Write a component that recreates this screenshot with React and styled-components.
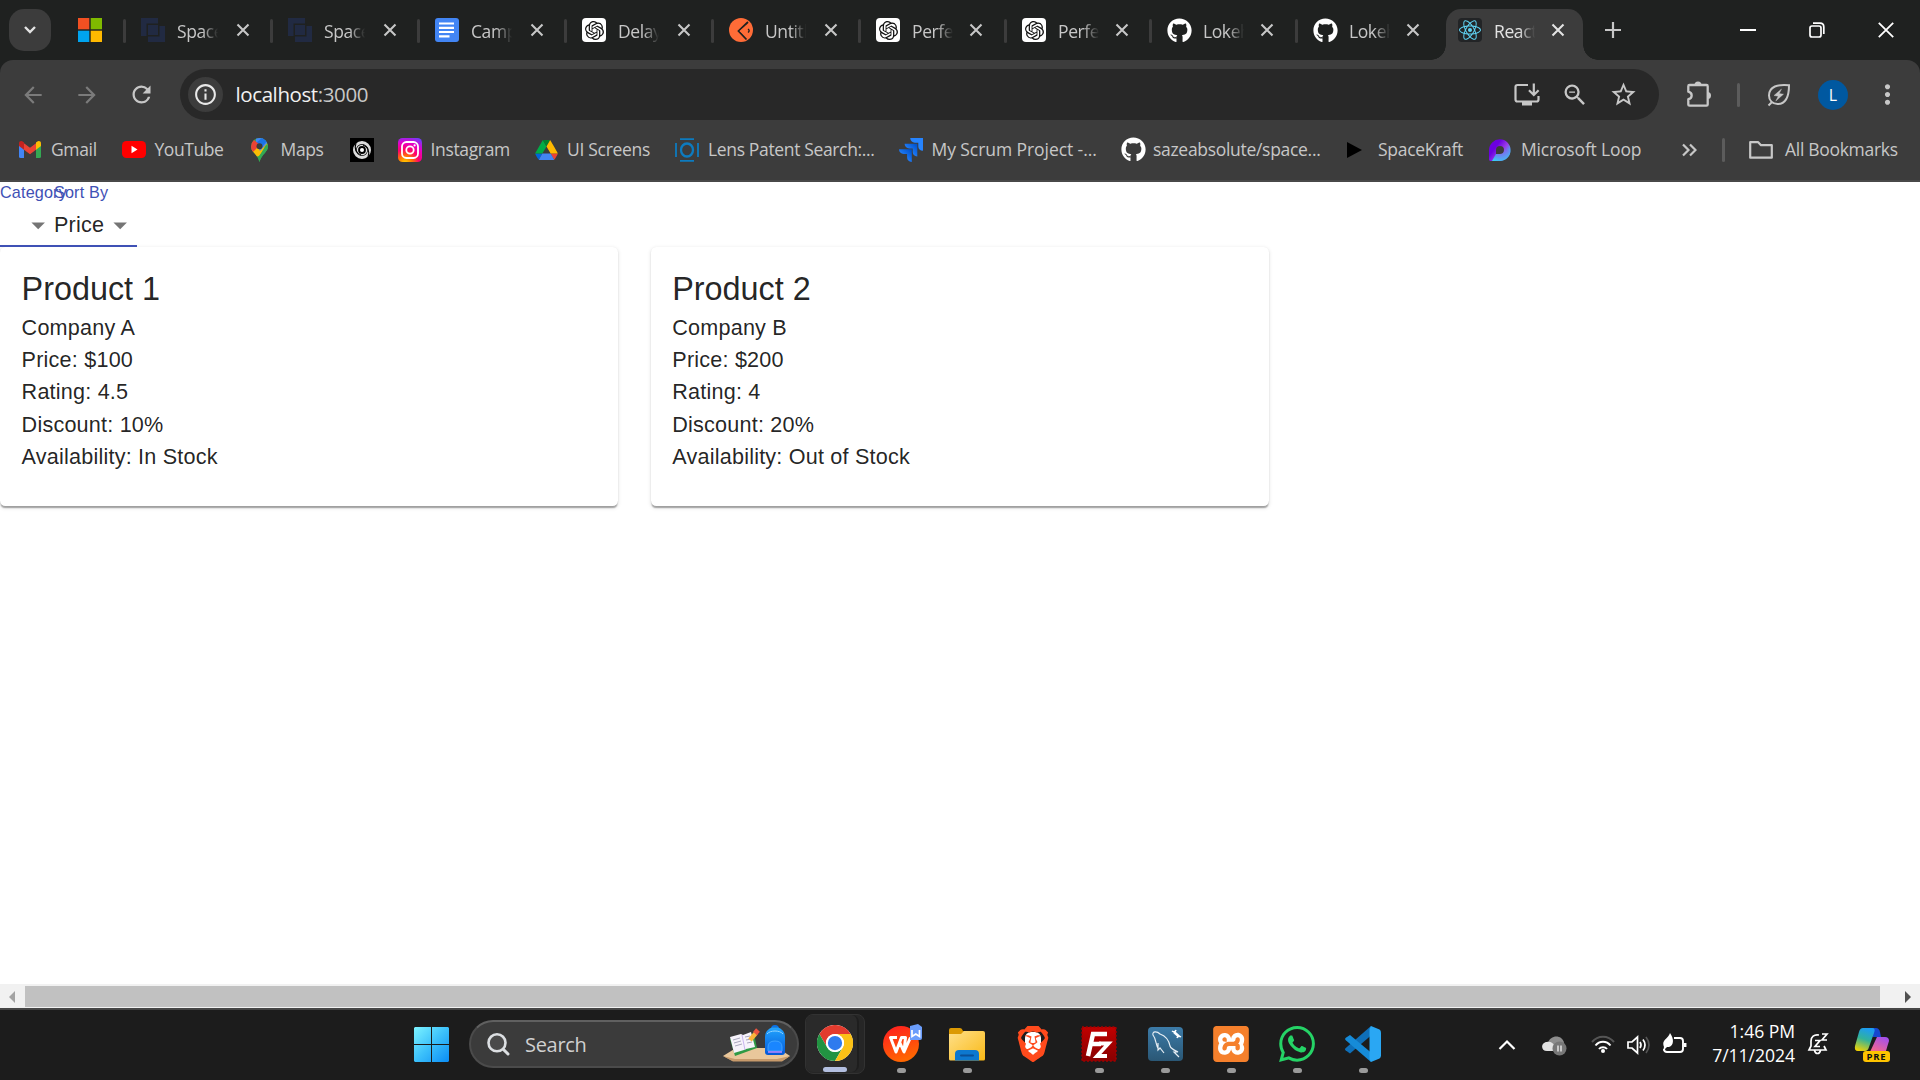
import React from "react";
import styled, { createGlobalStyle } from "styled-components";
import { FaGithub } from "react-icons/fa";
import { SiOpenai, SiBrave, SiXampp, SiWhatsapp, SiReact } from "react-icons/si";
import { MdArrowBack, MdArrowForward, MdRefresh, MdInfoOutline, MdZoomOut, MdStarOutline, MdMoreVert, MdArrowDropDown } from "react-icons/md";

const ui = '"Open Sans", "Noto Sans", sans-serif';

const Global = createGlobalStyle`
  * { box-sizing: border-box; }
  html, body { margin: 0; padding: 0; background: #fff; overflow: hidden; }
  svg { display: block; flex: none; }
`;

const Desktop = styled.div`
  width: 1920px;
  height: 1080px;
  display: flex;
  flex-direction: column;
  overflow: hidden;
  font-family: ${ui};
`;

/* ---------- tab strip ---------- */
const TabStrip = styled.div`
  height: 60px;
  display: flex;
  align-items: stretch;
  background: #1f2120;
`;
const TabSearch = styled.div`
  width: 42px;
  height: 42px;
  margin: 9px 0 0 9px;
  border-radius: 15px;
  background: #3c3c3c;
  display: grid;
  place-items: center;
`;
const PinnedTab = styled.div`
  width: 72px;
  padding: 18px 0 0 27px;
`;
const Tab = styled.div`
  width: ${(p) => p.$w}px;
  display: flex;
  position: relative;
  color: #c7c7c7;
  padding-left: 18px;
  &::before {
    content: "";
    position: absolute;
    left: 0;
    top: 19px;
    width: 3px;
    height: 24px;
    border-radius: 2px;
    background: #3c3c3c;
  }
`;
const ActiveTab = styled.div`
  width: 137px;
  height: 51px;
  margin-top: 9px;
  padding-left: 12px;
  display: flex;
  position: relative;
  color: #e3e3e3;
  background: #3c3c3c;
  border-radius: 15px 15px 0 0;
  &::before, &::after {
    content: "";
    position: absolute;
    bottom: 0;
    width: 15px;
    height: 15px;
  }
  &::before { left: -15px; background: radial-gradient(circle at 0 0, transparent 14.5px, #3c3c3c 15px); }
  &::after { right: -15px; background: radial-gradient(circle at 100% 0, transparent 14.5px, #3c3c3c 15px); }
`;
const TabIcon = styled.div`
  width: 24px;
  height: 24px;
  margin-top: ${(p) => (p.$active ? 9 : 18)}px;
`;
const TabTitle = styled.div`
  width: 42px;
  margin: ${(p) => (p.$active ? 9 : 18)}px 0 0 12px;
  height: 27px;
  line-height: 27px;
  font-size: 17.5px;
  letter-spacing: -0.4px;
  white-space: nowrap;
  overflow: hidden;
  mask-image: linear-gradient(90deg, #000 60%, transparent 98%);
`;
const TabClose = styled.div`
  width: 18px;
  margin: ${(p) => (p.$active ? 12 : 21)}px 0 0 ${(p) => (p.$tight ? 13 : 15)}px;
`;
const NewTab = styled.div`
  width: 30px;
  margin: 15px 0 0 15px;
  color: #c7c7c7;
`;
const WindowButtons = styled.div`
  margin-left: auto;
  display: flex;
  align-items: center;
  height: 59px;
`;
const WindowButton = styled.div`
  width: 69px;
  display: grid;
  place-items: center;
`;
const Tile = styled.div`
  width: 24px;
  height: 24px;
  border-radius: 4px;
  display: grid;
  place-items: center;
  background: ${(p) => p.$bg};
  color: ${(p) => p.$fg};
`;

/* ---------- toolbar ---------- */
const Chrome = styled.div`
  background: #1f2120;
`;
const ToolArea = styled.div`
  height: 122px;
  background: #3c3c3c;
  border-radius: 13px 13px 0 0;
  border-bottom: 2px solid #484848;
`;
const Toolbar = styled.div`
  height: 69px;
  padding: 9px 0 0 6px;
  display: flex;
`;
const NavButton = styled.div`
  width: 54px;
  height: 51px;
  flex: none;
  display: grid;
  place-items: center;
  color: ${(p) => (p.$off ? "#7b7b7b" : "#c7c7c7")};
`;
const Omnibox = styled.div`
  width: 1479px;
  height: 51px;
  flex: none;
  margin-left: 12px;
  padding: 0 12px 0 8px;
  border-radius: 26px;
  background: #282828;
  display: flex;
  align-items: center;
  color: #c7c7c7;
`;
const SiteInfo = styled.div`
  width: 35px;
  height: 35px;
  border-radius: 50%;
  display: grid;
  place-items: center;
  color: #e8e8e8;
  background: #3c3c3c;
`;
const Address = styled.div`
  flex: 1;
  margin-left: 12.5px;
  padding-bottom: 2px;
  font-size: 20.5px;
  letter-spacing: -0.4px;
  color: #c7c7c7;
  b { font-weight: 400; color: #f1f1f1; }
`;
const OmniAction = styled.div`
  width: 48px;
  display: grid;
  place-items: center;
`;
const ToolAction = styled.div`
  width: ${(p) => p.$w}px;
  height: 51px;
  flex: none;
  display: grid;
  place-items: center;
  color: #c7c7c7;
`;
const Rule = styled.div`
  width: 3px;
  height: 24px;
  border-radius: 2px;
  background: #5c5c5c;
`;
const Avatar = styled.div`
  width: 30px;
  height: 30px;
  border-radius: 50%;
  background: #0058a0;
  color: #fff;
  font-size: 16px;
  line-height: 30px;
  text-align: center;
`;

/* ---------- bookmarks ---------- */
const Bookmarks = styled.div`
  height: 51px;
  margin-top: -5px;
  padding-left: 19px;
  display: flex;
  align-items: center;
  color: #c7c7c7;
`;
const Bookmark = styled.div`
  width: ${(p) => p.$w}px;
  flex: none;
  display: flex;
  align-items: center;
`;
const BookmarkIcon = styled.div`
  width: ${(p) => p.$w}px;
  height: 24px;
  flex: none;
  display: flex;
  align-items: center;
`;
const BookmarkText = styled.span`
  white-space: nowrap;
  font-size: 17.5px;
  line-height: 26px;
  padding-bottom: 1px;
  letter-spacing: ${(p) => p.$ls ?? -0.35}px;
`;

/* ---------- page ---------- */
const Page = styled.main`
  height: 802px;
  background: #fff;
  color: rgba(0, 0, 0, 0.87);
  font-family: "Liberation Sans", Arial, sans-serif;
`;
const Filters = styled.div`
  display: flex;
  height: 64.8px;
`;
const FormControl = styled.div`
  position: relative;
  padding-top: 21.6px;
`;
const Label = styled.label`
  position: absolute;
  left: 0;
  top: 2px;
  white-space: nowrap;
  font-size: 16.2px;
  line-height: 1;
  letter-spacing: 0.00938em;
  color: #3f51b5;
`;
const Select = styled.div`
  height: 43.2px;
  min-width: 54px;
  display: flex;
  align-items: center;
  justify-content: flex-end;
  padding-top: 2px;
  font-size: 21.6px;
  letter-spacing: 0.00938em;
  border-bottom: 2.7px solid #3f51b5;
  svg { color: rgba(0, 0, 0, 0.54); }
`;
const Cards = styled.div`
  display: flex;
  gap: 32.4px;
`;
const Card = styled.article`
  width: 618.3px;
  height: 259.2px;
  padding: 21.6px;
  border-radius: 5.4px;
  background: #fff;
  box-shadow: 0 2.7px 1.35px -1.35px rgba(0,0,0,.2), 0 1.35px 1.35px 0 rgba(0,0,0,.14), 0 1.35px 4.05px 0 rgba(0,0,0,.12);
`;
const CardTitle = styled.h5`
  margin: 0;
  font-size: 32.4px;
  line-height: 43.2px;
  font-weight: 400;
  letter-spacing: -0.03px;
`;
const CardLine = styled.p`
  margin: 0;
  font-size: 21.6px;
  line-height: 32.4px;
  letter-spacing: 0.00938em;
`;
const Scrollbar = styled.div`
  height: 26px;
  padding: 2px 0 1px;
  display: grid;
  grid-template-columns: 25px 1855px 40px;
  background: #f1f1f1;
  border-bottom: 2px solid #454545;
`;
const Thumb = styled.div`
  background: #c1c1c1;
`;
const ScrollArrow = styled.div`
  display: flex;
  align-items: center;
  padding-left: ${(p) => p.$pad}px;
`;

/* ---------- taskbar ---------- */
const Taskbar = styled.footer`
  height: 70px;
  background: #1c1c1c;
  display: flex;
  padding-left: 414px;
  color: #fff;
`;
const Start = styled.div`
  width: 55px;
  padding-top: 17px;
`;
const SearchBox = styled.div`
  width: 330px;
  height: 48px;
  margin-top: 10px;
  padding: 0 6px 0 16px;
  border-radius: 24px;
  border: 2px solid #4b4b4b;
  border-top-color: #606060;
  background: #3b3b3b;
  display: flex;
  align-items: center;
`;
const SearchText = styled.div`
  flex: 1;
  margin-left: 15px;
  font-size: 20px;
  letter-spacing: -0.3px;
  color: #d0d0d0;
`;
const Apps = styled.div`
  display: flex;
  margin-left: 3px;
`;
const AppSlot = styled.div`
  width: 66px;
  height: 70px;
  display: flex;
  flex-direction: column;
  align-items: center;
  padding-top: 16px;
`;
const ActiveApp = styled.div`
  width: 60px;
  height: 60px;
  margin: 4px 3px 0 3px;
  border-radius: 8px;
  border: 1.5px solid #323232;
  background: #262626;
`;
const ActiveFace = styled.div`
  width: 53px;
  height: 57px;
  border-radius: 7px;
  border-right: 2px solid #1e1e1e;
  background: #2a2a2a;
  display: flex;
  flex-direction: column;
  align-items: center;
  padding: 10px 0 0 6px;
`;
const AppFace = styled.div`
  width: 36px;
  height: 36px;
  display: grid;
  place-items: center;
  position: relative;
`;
const Running = styled.div`
  width: ${(p) => p.$w}px;
  height: 5px;
  margin-top: 6px;
  border-radius: 3px;
  background: ${(p) => p.$c};
`;
const Tray = styled.div`
  flex: 1;
  display: flex;
  align-items: center;
  height: 70px;
  padding-left: 102px;
`;
const TrayItem = styled.div`
  width: ${(p) => p.$w}px;
  flex: none;
  margin-top: ${(p) => p.$drop ?? 0}px;
`;
const Clock = styled.div`
  width: 108px;
  text-align: right;
  font-size: 17.6px;
  line-height: 24px;
  letter-spacing: -0.05px;
  margin-right: 12px;
  padding-bottom: 4px;
  white-space: nowrap;
`;
const BraveBack = styled.div`
  width: 16px;
  height: 24px;
  border-radius: 6px;
  background: #fff;
  grid-area: 1 / 1;
`;
const Stacked = styled.div`
  grid-area: 1 / 1;
  position: relative;
  color: ${(p) => p.$c};
`;
const XamppBack = styled.div`
  grid-area: 1 / 1;
  width: 30px;
  height: 30px;
  background: #fff;
`;

/* ---------- drawings ---------- */
const MsLogo = () => (
  <svg width="24" height="24"><path fill="#f25022" d="M0 0h11.3v11.3H0z" /><path fill="#7fba00" d="M12.7 0H24v11.3H12.7z" /><path fill="#00a4ef" d="M0 12.7h11.3V24H0z" /><path fill="#ffb900" d="M12.7 12.7H24V24H12.7z" /></svg>
);
const SpaceIcon = () => (
  <svg width="24" height="24"><path fill="#212a42" d="M0 0h17v18H0z" /><path fill="#212a42" stroke="#1f2120" d="M6.500 7.500h18v17h-18z" /><path fill="#1f2120" d="M5.500 5.500h13v13h-13z" /><path fill="#212a42" d="M7 7h10v10H7z" /></svg>
);
const DocsIcon = () => (
  <svg width="24" height="24"><rect width="24" height="24" rx="3" fill="#4285f4" /><path d="M4 5.500h15M4 9.800h15M4 14h15M4 18.300h10.500" stroke="#fff" strokeWidth="2.200" /></svg>
);
const GptIcon = () => <Tile $bg="#fff" $fg="#111"><SiOpenai size={19} /></Tile>;
const PostmanIcon = () => (
  <svg width="24" height="24"><circle cx="12" cy="12" r="12" fill="#ff6c37" /><path d="M19 4 9.500 13l8 8.500" fill="none" stroke="#1f2120" strokeWidth="1.800" /><path d="m10.500 13 7-6v12z" fill="#ff6c37" /><path d="M19 11c1.500 1 1.500 2.500 0 3.500" stroke="#1f2120" strokeWidth="1.400" fill="none" /></svg>
);
const GithubIcon = () => <FaGithub size={25} color="#fff" />;
const ReactIcon = () => <Tile $bg="#222426" $fg="#5fd3f3"><SiReact size={22} /></Tile>;

const InstallIcon = () => (
  <svg width="26" height="24" fill="none" stroke="#c7c7c7" strokeWidth="2.200"><path d="M14 2H3.500Q1.500 2 1.500 4v12.500q0 2 2 2h19q2 0 2-2V13" /><path fill="#c7c7c7" strokeWidth="0" d="M8 18h10v4.500H8z" /><path d="M19.800.5v11M15 7.200l4.800 4.800 4.800-4.800" /></svg>
);
const PuzzleIcon = () => (
  <svg width="26" height="28"><path fill="none" stroke="#c7c7c7" strokeWidth="2.300" strokeLinejoin="round" d="M4.500 4h17q1.200 0 1.200 1.200v18.300q0 1.200-1.200 1.200h-17q-1.200 0-1.200-1.200v-5.300c4.500-1 4.500-6.500 0-7.500V5.200Q3.300 4 4.500 4z" /><path fill="#c7c7c7" d="M9.500 4a3.500 3.500 0 0 1 7 0zM22.500 11a3.500 3.500 0 0 1 0 7z" /></svg>
);

const GmailIcon = () => (
  <svg width="22" height="17" viewBox="0 0 22 17"><path fill="#4285f4" d="M0 3v12.500Q0 17 1.500 17H5V6.500z" /><path fill="#34a853" d="M22 3v12.500q0 1.500-1.500 1.500H17V6.500z" /><path fill="#ea4335" d="m4 1.500 7 5.300 7-5.300v6.500l-7 5.200-7-5.200z" /><path fill="#c5221f" d="M0 2.300C0 .2 2.300-.6 4 .7l1 .8V8.700L0 5z" /><path fill="#fbbc04" d="M22 2.300C22 .2 19.700-.6 18 .7l-1 .8V8.700L22 5z" /></svg>
);
const YoutubeIcon = () => (
  <svg width="24" height="17"><rect width="24" height="17" rx="4.500" fill="#f00" /><path d="m9.500 4.800 6 3.700-6 3.700z" fill="#fff" /></svg>
);
const MapsIcon = () => (
  <svg width="17" height="24" viewBox="0 0 17 24">
    <defs><clipPath id="pin"><path d="M8.500 0A8.500 8.500 0 0 0 0 8.500C0 14 6 15.500 8.500 24 11 15.500 17 14 17 8.500A8.500 8.500 0 0 0 8.500 0z" /></clipPath></defs>
    <g clipPath="url(#pin)"><path fill="#34a853" d="M0 0h17v24H0z" /><path fill="#fbbc04" d="M0 20V12L12 1l5 6-9 11z" /><path fill="#4285f4" d="M5 0h12v4L9 13 5 6z" /><path fill="#1a73e8" d="M5 5 12-1h5v3L9 11z" /><path fill="#ea4335" d="M0 2h3l6 5-7 7H0z" /><path fill="#34a853" d="M17 5v19H7c0-6 5-11 7-16z" /></g><circle cx="8.500" cy="8.300" r="3" fill="#3c3c3c" />
  </svg>
);
const SwirlIcon = () => (
  <svg width="24" height="24"><path fill="#000" d="M0 0h24v24H0z" /><g fill="none" stroke="#dcdcdc"><circle cx="12" cy="12" r="7.500" strokeWidth="3" /><circle cx="12" cy="12" r="4.600" strokeWidth="1.400" /><path stroke="#000" strokeWidth="1.100" d="M6 5c-2 6 0 10 5 12M18 19c2-6 0-10-5-12" /></g><circle cx="12" cy="12" r="2" fill="#fff" /></svg>
);
const InstaIcon = () => (
  <svg width="24" height="24">
    <defs><radialGradient id="ig" cx=".3" cy="1.050" r="1.150"><stop offset="0" stopColor="#ffd600" /><stop offset=".25" stopColor="#ff7a00" /><stop offset=".5" stopColor="#ff0169" /><stop offset=".75" stopColor="#e500c8" /><stop offset="1" stopColor="#7638fa" /></radialGradient></defs>
    <rect width="24" height="24" rx="4.500" fill="url(#ig)" /><g fill="none" stroke="#fff" strokeWidth="1.800"><rect x="4" y="4" width="16" height="16" rx="4.500" /><circle cx="12" cy="12" r="3.700" /></g><circle cx="16.600" cy="7.400" r="1.100" fill="#fff" />
  </svg>
);
const DriveIcon = () => (
  <svg width="23" height="20" viewBox="0 0 87.300 78"><path d="m6.600 66.850 3.850 6.650c.8 1.400 1.950 2.500 3.300 3.300l13.750-23.800H0c0 1.550.4 3.100 1.200 4.500z" fill="#0066da" /><path d="M43.650 25 29.900 1.200c-1.350.8-2.500 1.900-3.300 3.300L1.200 48.500C.4 49.900 0 51.450 0 53h27.500z" fill="#00ac47" /><path d="M73.550 76.800c1.350-.8 2.500-1.900 3.300-3.300l9.250-16c.8-1.400 1.200-2.950 1.200-4.500H59.800l5.850 11.500z" fill="#ea4335" /><path d="M43.650 25 57.400 1.200C56.050.4 54.500 0 52.900 0H34.400c-1.600 0-3.150.45-4.500 1.200z" fill="#00832d" /><path d="M59.800 53H27.500L13.750 76.800c1.350.8 2.900 1.200 4.500 1.200h50.800c1.600 0 3.150-.45 4.500-1.200z" fill="#4285f4" /><path d="m73.400 26.500-12.700-22c-.8-1.400-1.950-2.500-3.300-3.300L43.650 25 59.800 53h27.450c0-1.550-.4-3.100-1.200-4.500z" fill="#ffba00" /></svg>
);
const LensIcon = () => (
  <svg width="24" height="24" fill="none" stroke="#0d7bbf"><ellipse cx="12" cy="12" rx="6" ry="6.500" strokeWidth="2.300" /><path strokeWidth="1.800" d="M1 5v14M23 5v14M5 1.200h14M5 22.800h14" /></svg>
);
const JiraIcon = () => (
  <svg width="24" height="24" viewBox="0 0 24 24"><defs><linearGradient id="jr" x1="1" y1="0" x2=".3" y2=".7"><stop offset=".1" stopColor="#0052cc" /><stop offset="1" stopColor="#2684ff" /></linearGradient></defs><path fill="#2684ff" d="M11.200 0H24v12.800c-3 0-4.700-2-4.700-4.400V4.700H15.800c-2.600 0-4.600-2-4.600-4.700z" /><path fill="url(#jr)" d="M5.600 5.700h12.700v12.700c-3 0-4.600-2-4.600-4.400v-3.600h-3.500c-2.600 0-4.600-2-4.600-4.700z" /><path fill="url(#jr)" d="M0 11.300h12.800V24c-3 0-4.700-2-4.700-4.400V16H4.600C2 16 0 14 0 11.300z" /></svg>
);
const PlayIcon = () => <svg width="24" height="24"><path d="m2 4 15 8-15 8z" fill="#000" /></svg>;
const LoopIcon = () => (
  <svg width="22" height="22" viewBox="0 0 22 22"><defs><linearGradient id="lp" x1=".1" y1=".3" x2=".9" y2=".9"><stop offset=".2" stopColor="#6b00e0" /><stop offset=".55" stopColor="#9b3ce8" /><stop offset="1" stopColor="#27e0f5" /></linearGradient><linearGradient id="lp2" x1="0" y1="1" x2="1" y2="0"><stop offset="0" stopColor="#2ce0f5" /><stop offset="1" stopColor="#8a5df0" stopOpacity=".3" /></linearGradient></defs><path fill="url(#lp)" fillRule="evenodd" d="M0 20.500V11a10.800 10.800 0 1 1 10.800 10.900H1.400Q0 21.900 0 20.500zM11 7a4 4 0 0 0-4 4v4h4a4 4 0 0 0 0-8z" /><path fill="url(#lp2)" d="M3 21.900 7 15h4a4 4 0 0 0 4-4l6.500 1c-1 6-5 9.900-10.700 9.900z" /></svg>
);
const FolderOutline = () => <svg width="24" height="20" fill="none" stroke="#c7c7c7" strokeWidth="2.200" strokeLinejoin="round"><path d="M1.200 2.200h8l2.800 3h10.800v12.500H1.200z" /></svg>;
const LeafIcon = () => (
  <svg width="24" height="24" fill="none" stroke="#c7c7c7" strokeWidth="2"><path d="M22 2.200C11 1 2 3.500 2 12.500c0 5 3.500 8.500 8.500 8.500C19 21 22 13 22 2.200zM1.500 22.500 5 19" /><path fill="#c7c7c7" strokeWidth=".4" d="m14.500 6-7.500 6.500 4.200.8L8.800 18l7.700-6.800-4.300-.6z" /></svg>
);

const WinLogo = () => (
  <svg width="35" height="35"><defs><linearGradient id="wl" gradientUnits="userSpaceOnUse" x1="0" y1="0" x2="35" y2="35"><stop offset="0" stopColor="#7df3ff" /><stop offset=".5" stopColor="#3cc1fb" /><stop offset="1" stopColor="#0a8cf5" /></linearGradient></defs><path fill="url(#wl)" d="M1 0h16v17H0V1zM18 0h16l1 1v16H18zM0 18h17v17H1l-1-1zM18 18h17v16l-1 1H18z" /></svg>
);
const SearchGlass = () => (
  <svg width="23" height="23" fill="none" stroke="#dcdfe2" strokeWidth="2.600" strokeLinecap="round"><circle cx="10" cy="9.800" r="8.500" fill="#4a4a4a" /><path strokeWidth="3" d="m16.500 16.500 4.500 4.500" /></svg>
);
const SchoolArt = () => (
  <svg width="68" height="38" viewBox="0 0 68 38">
    <defs><linearGradient id="bp" x1="0" y1="0" x2="0" y2="1"><stop offset="0" stopColor="#22a5ff" /><stop offset="1" stopColor="#0458d8" /></linearGradient></defs>
    <path fill="#e9c79b" d="M0 31 13 23h42l12 8-8 5H10z" /><path fill="#c79a6b" d="m0 31 12 3h42l13-3-8 5.500H10z" />
    <path fill="#2f9a45" d="m7 14 24-5 3 14-22 8z" /><path fill="#f6f3fb" d="m7 12 11-3 2 1 8-3 4 15-9 2-2 1-10 3z" /><path stroke="#a9a7bd" strokeWidth="1" d="m10 15 7-2M11 18l7-2M12 21l7-2M22 12l5-1M23 15l5-1M24 18l5-1" fill="none" /><path stroke="#c9b7ef" d="m19 10 3 15" />
    <path stroke="#f9b53b" strokeWidth="4.500" d="m27 15 6-7" /><path stroke="#ea5440" strokeWidth="5" d="m32 8.500 3-3.500" />
    <path fill="none" stroke="#0b72e8" strokeWidth="2" d="M49 4c0-4 6-4 6 0" /><path fill="url(#bp)" d="M42 12c0-13 20-13 20 0v15q0 3-3 3H45q-3 0-3-3z" /><path fill="#1a86ff" stroke="#3fa2ff" d="M45 26v-4q0-6 7-6t7 6v4z" /><path stroke="#bb86ff" strokeWidth="1.500" d="M45 27h14" /><path fill="none" stroke="#8fd4ff" d="M44 9c3-4 13-4 16 0" />
  </svg>
);
const ChromeIcon = () => (
  <svg width="36" height="36" viewBox="0 0 48 48"><circle cx="24" cy="24" r="24" fill="#fff" /><path fill="#e33b2e" d="M3.200 12A24 24 0 0 1 44.800 12H24a12 12 0 0 0-10.400 18z" /><path fill="#229342" d="M3.200 12A24 24 0 0 0 24 48l10.400-18a12 12 0 0 1-20.800 0z" /><path fill="#fbc116" d="M44.800 12A24 24 0 0 1 24 48l10.400-18A12 12 0 0 0 24 12z" /><circle cx="24" cy="24" r="12" fill="#fff" /><circle cx="24" cy="24" r="9.500" fill="#2f7bee" /></svg>
);
const WpsIcon = () => (
  <svg width="36" height="36" viewBox="0 2 36 36" overflow="visible"><defs><linearGradient id="wp" x1=".2" y1="0" x2=".6" y2="1"><stop offset="0" stopColor="#ff1f1f" /><stop offset="1" stopColor="#ff6a00" /></linearGradient></defs><circle cx="18" cy="20" r="18" fill="url(#wp)" /><path fill="none" stroke="#fff" strokeWidth="3" strokeLinejoin="round" d="M14 13.500H7.500l5.500 14.500L18.500 13.500h4L21 28l-4-9M21 28l6.500-14.500" /><path fill="#6b9dfb" d="m27 2 8-2 4 3v11q0 2-2 2H27z" /><path fill="none" stroke="#fff" strokeWidth="1.700" d="M29 6v6.500l3.800-2.500 3.700 2.500V6" /></svg>
);
const ExplorerIcon = () => (
  <svg width="36" height="36"><defs><linearGradient id="ex" x1="0" y1="0" x2="1" y2="1"><stop offset="0" stopColor="#ffe08a" /><stop offset="1" stopColor="#f9b916" /></linearGradient></defs><path fill="#dc9a04" d="M0 4q0-2 2-2h9q2 0 3 3h10v8H0z" /><path fill="url(#ex)" d="M0 8h12l3-3h19q2 0 2 2v26q0 1.500-1.500 1.500h-33Q0 34.500 0 33z" /><path fill="#0d78cf" d="M6 34.500V28q0-4 4-4h16q4 0 4 4v6.500z" /><path stroke="#0b4f96" strokeWidth="2" strokeLinecap="round" d="M12 29.500h12" /></svg>
);
const FileZillaIcon = () => (
  <svg width="36" height="36"><defs><linearGradient id="fz" x1="0" y1="0" x2="0" y2="1"><stop offset="0" stopColor="#c10000" /><stop offset="1" stopColor="#870000" /></linearGradient></defs><rect x="1" y="1" width="34" height="34" fill="url(#fz)" stroke="#a00000" strokeWidth="1.500" strokeDasharray="2 1.800" /><path fill="none" stroke="#fff" strokeWidth="4.500" d="M7 30 12 8h14M10 18h10" /><path fill="none" stroke="#fff" strokeWidth="3.800" d="M18 17.500h9.500L16 30h10" /></svg>
);
const WorkbenchIcon = () => (
  <svg width="35" height="36"><defs><linearGradient id="wb" x1="0" y1="0" x2="0" y2="1"><stop offset="0" stopColor="#3c7ba8" /><stop offset="1" stopColor="#2a5775" /></linearGradient></defs><rect y="1" width="35" height="34" rx="4" fill="url(#wb)" /><path fill="none" stroke="#e6eef4" strokeWidth="1.200" d="M11 24C7 19 9 14 5 9c-1-4 4-4 7-1 6 2 9 7 10 12 1 3 4 4 8 6l-4 0 5 5M10 17l0 7 2-2 4 5" /><path stroke="#fff" strokeWidth="2.500" d="m26 6 5 4.500" /><path fill="none" stroke="#fff" strokeWidth="1.500" d="M24 5q3 2 4-1M29 12q1-3 4-1" /></svg>
);
const VsCodeIcon = () => (
  <svg width="36" height="36" viewBox="0 0 36 36"><path fill="#0f6fb8" d="M26 0v9.500L5 27.500l-4.500-3.300q-1-1 0-2z" /><path fill="#168bd8" d="M26 36v-9.500L5 9 .8 11.800q-1.300 1 0 2.500z" /><path fill="#2aa7f3" d="m26 0 8.500 3.500q1.500 1 1.500 3v23q0 2-1.500 3L26 36l-1.500-3V3z" /></svg>
);
const CopilotIcon = () => (
  <svg width="36" height="36" viewBox="0 0 36 36"><defs><linearGradient id="cp" x1=".5" y1="0" x2=".2" y2="1"><stop offset="0" stopColor="#1d9cf0" /><stop offset=".45" stopColor="#31b29b" /><stop offset="1" stopColor="#f5d300" /></linearGradient><linearGradient id="cq" x1=".8" y1="0" x2=".3" y2="1"><stop offset="0" stopColor="#a14ff0" /><stop offset="1" stopColor="#ff6b7e" /></linearGradient></defs><path fill="#1746cf" d="M11 1h11q3 0 4 4l1 5h-8z" /><path fill="url(#cp)" d="M9 1h9q4 0 2 5l-5 14q-1 4-4 4H4q-4 0-3-5L5 5q1-4 4-4z" /><path fill="url(#cq)" d="M23 10h8q4 0 4 4l-4 13H15z" /><rect x="9" y="24" width="27" height="11" rx="3" fill="#ffc400" /><text x="22.500" y="33" textAnchor="middle" fontFamily="Open Sans, sans-serif" fontWeight="700" fontSize="9.500" letterSpacing=".8" fill="#111">PRE</text></svg>
);

const tabs = [
  { w: 147, title: "SpaceKraft", Icon: SpaceIcon },
  { w: 147, title: "SpaceKraft", Icon: SpaceIcon },
  { w: 147, title: "Campus", Icon: DocsIcon },
  { w: 147, title: "Delay", Icon: GptIcon },
  { w: 147, title: "Untitled", Icon: PostmanIcon },
  { w: 146, title: "Perfect", Icon: GptIcon },
  { w: 145, title: "Perfect", Icon: GptIcon },
  { w: 146, title: "Lokeh", Icon: GithubIcon },
  { w: 151, title: "Lokeh", Icon: GithubIcon },
];

const bookmarks = [
  { w: 103, iw: 32, text: "Gmail", Icon: GmailIcon },
  { w: 129, iw: 32.5, text: "YouTube", Icon: YoutubeIcon, ls: -0.45 },
  { w: 99, iw: 29.5, text: "Maps", Icon: MapsIcon },
  { w: 48, iw: 24, text: "", Icon: SwirlIcon },
  { w: 137, iw: 32.5, text: "Instagram", Icon: InstaIcon },
  { w: 140, iw: 32, text: "UI Screens", Icon: DriveIcon, ls: -0.3 },
  { w: 224, iw: 33, text: "Lens Patent Search:...", Icon: LensIcon },
  { w: 221.5, iw: 32.5, text: "My Scrum Project -...", Icon: JiraIcon, ls: -0.07 },
  { w: 224.5, iw: 32.5, text: "sazeabsolute/space...", Icon: GithubIcon, ls: -0.3 },
  { w: 144, iw: 33, text: "SpaceKraft", Icon: PlayIcon, ls: -0.3 },
  { w: 193, iw: 32, text: "Microsoft Loop", Icon: LoopIcon, ls: -0.17 },
];

const products = [
  { name: "Product 1", lines: ["Company A", "Price: $100", "Rating: 4.5", "Discount: 10%", "Availability: In Stock"] },
  { name: "Product 2", lines: ["Company B", "Price: $200", "Rating: 4", "Discount: 20%", "Availability: Out of Stock"] },
];

const BraveIcon = () => (
  <><BraveBack /><Stacked $c="#ff4a1c"><SiBrave size={36} /></Stacked></>
);
const XamppIcon = () => (
  <><XamppBack /><Stacked $c="#f5802c"><SiXampp size={36} /></Stacked></>
);
const WhatsappIcon = () => <SiWhatsapp size={36} color="#25d366" />;

const apps = [
  { Icon: WpsIcon, run: true },
  { Icon: ExplorerIcon, run: true },
  { Icon: BraveIcon, run: false },
  { Icon: FileZillaIcon, run: true },
  { Icon: WorkbenchIcon, run: true },
  { Icon: XamppIcon, run: true },
  { Icon: WhatsappIcon, run: true },
  { Icon: VsCodeIcon, run: true },
];

const CloseGlyph = () => <svg width="18" height="18" stroke="currentColor" strokeWidth="2.100"><path d="m3.500 3.500 11 11m0-11-11 11" /></svg>;

export default function App() {
  return (
    <Desktop>
      <Global />
      <TabStrip>
        <TabSearch>
          <svg width="14" height="10" fill="none" stroke="#e3e3e3" strokeWidth="2.400"><path d="m2 2 5 5 5-5" /></svg>
        </TabSearch>
        <PinnedTab><MsLogo /></PinnedTab>
        {tabs.map(({ w, title, Icon }, i) => (
          <Tab key={i} $w={w}>
            <TabIcon><Icon /></TabIcon>
            <TabTitle>{title}</TabTitle>
            <TabClose $tight={w !== 147}><CloseGlyph /></TabClose>
          </Tab>
        ))}
        <ActiveTab>
          <TabIcon $active><ReactIcon /></TabIcon>
          <TabTitle $active>React App</TabTitle>
          <TabClose $active $tight><CloseGlyph /></TabClose>
        </ActiveTab>
        <NewTab>
          <svg width="30" height="30" stroke="currentColor" strokeWidth="2.200"><path d="M7 15h16M15 7v16" /></svg>
        </NewTab>
        <WindowButtons>
          <WindowButton><svg width="16" height="16"><path d="M0 8h16" stroke="#fff" strokeWidth="2" /></svg></WindowButton>
          <WindowButton><svg width="16" height="16" fill="none" stroke="#fff" strokeWidth="1.700"><rect x="1" y="4" width="11" height="11" rx="2" /><path d="M4 1.200h7q3.800 0 3.800 3.800v7" /></svg></WindowButton>
          <WindowButton><svg width="16" height="16" stroke="#fff" strokeWidth="1.800"><path d="m.8.8 14.400 14.400m0-14.400L.8 15.200" /></svg></WindowButton>
        </WindowButtons>
      </TabStrip>

      <Chrome>
        <ToolArea>
          <Toolbar>
            <NavButton $off><MdArrowBack size={26} /></NavButton>
            <NavButton $off><MdArrowForward size={26} /></NavButton>
            <NavButton><MdRefresh size={27} /></NavButton>
            <Omnibox>
              <SiteInfo><MdInfoOutline size={25} /></SiteInfo>
              <Address><b>localhost</b>:3000</Address>
              <OmniAction><InstallIcon /></OmniAction>
              <OmniAction><MdZoomOut size={28} /></OmniAction>
              <OmniAction><MdStarOutline size={29} /></OmniAction>
            </Omnibox>
            <ToolAction $w={78}><PuzzleIcon /></ToolAction>
            <ToolAction $w={3}><Rule /></ToolAction>
            <ToolAction $w={78}><LeafIcon /></ToolAction>
            <ToolAction $w={30}><Avatar>L</Avatar></ToolAction>
            <ToolAction $w={78}><MdMoreVert size={31} /></ToolAction>
          </Toolbar>
          <Bookmarks>
            {bookmarks.map(({ w, iw, text, Icon, ls }, i) => (
              <Bookmark key={i} $w={w}>
                <BookmarkIcon $w={iw}><Icon /></BookmarkIcon>
                <BookmarkText $ls={ls}>{text}</BookmarkText>
              </Bookmark>
            ))}
            <Bookmark $w={40}>
              <svg width="15" height="14" fill="none" stroke="#c7c7c7" strokeWidth="2.200"><path d="m1 1.500 5.500 5.500L1 12.500M8 1.500 13.500 7 8 12.500" /></svg>
            </Bookmark>
            <Bookmark $w={27}><Rule /></Bookmark>
            <Bookmark $w={160}>
              <BookmarkIcon $w={36}><FolderOutline /></BookmarkIcon>
              <BookmarkText $ls={-0.3}>All Bookmarks</BookmarkText>
            </Bookmark>
          </Bookmarks>
        </ToolArea>
      </Chrome>

      <Page>
        <Filters>
          <FormControl>
            <Label>Category</Label>
            <Select><MdArrowDropDown size={32.4} /></Select>
          </FormControl>
          <FormControl>
            <Label>Sort By</Label>
            <Select>Price<MdArrowDropDown size={32.4} /></Select>
          </FormControl>
        </Filters>
        <Cards>
          {products.map((p) => (
            <Card key={p.name}>
              <CardTitle>{p.name}</CardTitle>
              {p.lines.map((l) => <CardLine key={l}>{l}</CardLine>)}
            </Card>
          ))}
        </Cards>
      </Page>
      <Scrollbar>
        <ScrollArrow $pad={9}><svg width="6" height="12"><path d="M6 0v12L0 6z" fill="#a3a3a3" /></svg></ScrollArrow>
        <Thumb />
        <ScrollArrow $pad={25}><svg width="6" height="12"><path d="M0 0v12l6-6z" fill="#505050" /></svg></ScrollArrow>
      </Scrollbar>

      <Taskbar>
        <Start><WinLogo /></Start>
        <SearchBox>
          <SearchGlass />
          <SearchText>Search</SearchText>
          <SchoolArt />
        </SearchBox>
        <Apps>
          <ActiveApp>
            <ActiveFace>
              <ChromeIcon />
              <Running $w={24} $c="#b3bfe0" />
            </ActiveFace>
          </ActiveApp>
          {apps.map(({ Icon, run }, i) => (
            <AppSlot key={i}>
              <AppFace><Icon /></AppFace>
              {run && <Running $w={9} $c="#9a9a9a" />}
            </AppSlot>
          ))}
        </Apps>
        <Tray>
          <TrayItem $w={44}><svg width="18" height="12" fill="none" stroke="#fff" strokeWidth="2.200"><path d="m1.500 10 7.500-7.500 7.500 7.500" /></svg></TrayItem>
          <TrayItem $w={49} $drop={2}>
            <svg width="26" height="22"><path fill="#8d8d8d" d="M6 8c2-8 14-9 16 0l-2 8H6z" /><path fill="#e2e2e2" d="M5 16c-7 0-6-9 0-9 3-1 6 1 7 3v6z" /><circle cx="17.500" cy="13.500" r="7" fill="#777" /><path d="M16 10.500v6M19 10.500v6" stroke="#fff" strokeWidth="1.200" /></svg>
          </TrayItem>
          <TrayItem $w={36}>
            <svg width="24" height="20" fill="none" strokeWidth="2"><path stroke="#555" d="M1 7c6-7 16-7 22 0" /><path stroke="#fff" d="M4.500 10.500c4-5 11-5 15 0M8 14c2-2.500 6-2.500 8 0" /><circle cx="12" cy="16" r="2" fill="#fff" /></svg>
          </TrayItem>
          <TrayItem $w={35}>
            <svg width="25" height="20" fill="none" stroke="#fff" strokeWidth="1.700"><path d="M1 7h4l5.500-5v16L5 13H1z" /><path d="M13 7q2 3 0 6M16 4.500q4 5.500 0 11" /><path stroke="#555" d="M19 2q6 8 0 16" /></svg>
          </TrayItem>
          <TrayItem $w={25}>
            <svg width="25" height="24" fill="none" stroke="#fff" strokeWidth="1.900"><path d="M12 5h6q3 0 3 3v8q0 3-3 3H5q-3 0-3-3" /><path strokeWidth="2.500" d="M23.200 10v4" /><path fill="#fff" strokeWidth="0" d="M8 0c5 7 3 13-1 14H5l-4 4 1-4C-1 7 6 6 8 0z" /></svg>
          </TrayItem>
          <Clock>1:46 PM<br />7/11/2024</Clock>
          <TrayItem $w={47}>
            <svg width="22" height="26" fill="none" stroke="#fff" strokeWidth="1.700"><path d="M12 3C7 2 4 5 4 9v5l-2 4h17l-2-4M7.500 18.500c1 4 5 4 6 0" /><path d="M8 8.500h5l-5 6h5M15 2h5l-5 6h5" /></svg>
          </TrayItem>
          <CopilotIcon />
        </Tray>
      </Taskbar>
    </Desktop>
  );
}
